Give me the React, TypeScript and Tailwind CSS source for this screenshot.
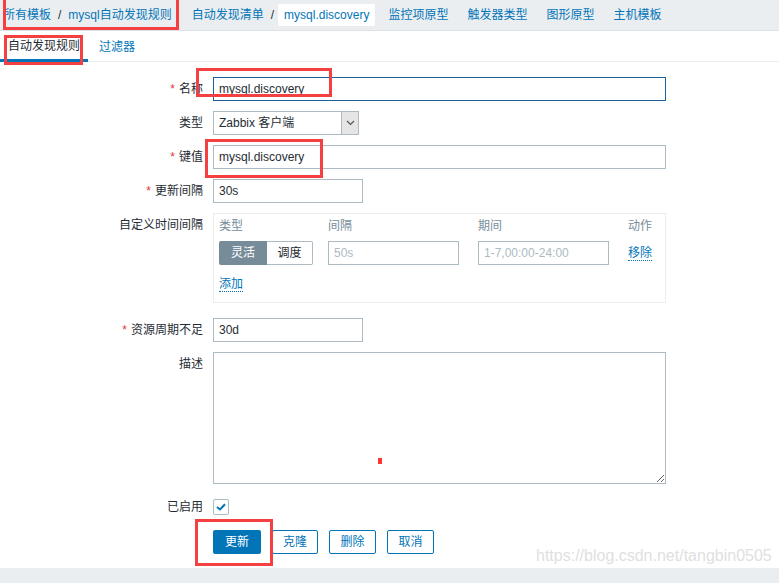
import React from "react";

const font = { fontFamily: '"Liberation Sans", Arial, "Noto Sans CJK SC", sans-serif' };

const Label = ({ text, required, top }: { text: string; required?: boolean; top?: boolean }) => (
  <div
    className={`w-[213px] shrink-0 pr-[10px] text-right text-[12px] text-[#1f2c33] ${top ? "pt-[5px] leading-[14px]" : "leading-[24px]"}`}>
    {required && <span className="text-[#e33734] mr-[4px]">*</span>}
    {text}
  </div>
);

const TextInput = ({ value, width, focused }: { value: string; width: string; focused?: boolean }) => (
  <input
    readOnly
    value={value}
    className={`${width} h-[24px] px-[5px] text-[12px] text-[#1f2c33] bg-white border outline-none ${focused ? "border-[#1f5f99]" : "border-[#acbbc2]"}`}
    style={font}
  />
);

const RedBox = ({ className }: { className: string }) => (
  <div className={`absolute border-[3px] border-[#f44040] pointer-events-none ${className}`} />
);

export default function App() {
  const topLinks = ["监控项原型", "触发器类型", "图形原型", "主机模板"];

  return (
    <div className="relative w-[779px] h-[583px] overflow-hidden bg-white flex flex-col" style={font}>
      {/* breadcrumbs */}
      <div className="h-[31px] shrink-0 bg-[#ebeef1] border-b border-[#dde2e6] flex items-center text-[12px] text-[#0275b8]">
        <span className="ml-[3px]">所有模板</span>
        <span className="mx-[7px] text-[#1f2c33]">/</span>
        <span>mysql自动发现规则</span>
        <span className="ml-[20px]">自动发现清单</span>
        <span className="ml-[7px] mr-[4px] text-[#1f2c33]">/</span>
        <span className="bg-white px-[6px] h-[22px] leading-[22px] rounded-[2px]">mysql.discovery</span>
        {topLinks.map((t, i) => (
          <span key={t} className={i === 0 ? "ml-[13px]" : "ml-[19px]"}>
            {t}
          </span>
        ))}
      </div>

      {/* tabs */}
      <div className="h-[31px] shrink-0 border-b border-[#ebeef1] flex items-stretch text-[12px]">
        <div className="w-[88px] flex items-center justify-center text-[#1f2c33] border-b-[3px] border-[#0275b8] -mb-px pt-[2px]">
          自动发现规则
        </div>
        <div className="ml-[11px] flex items-center text-[#0275b8] pt-[1px]">过滤器</div>
      </div>

      {/* form */}
      <div className="flex-1 pt-[15px]">
        <div className="flex mb-[10px]">
          <Label text="名称" required />
          <TextInput value="mysql.discovery" width="w-[453px]" focused />
        </div>

        <div className="flex mb-[10px]">
          <Label text="类型" />
          <div className="w-[146px] h-[24px] border border-[#acbbc2] bg-white flex text-[12px] text-[#1f2c33]">
            <div className="flex-1 pl-[5px] leading-[22px]">Zabbix 客户端</div>
            <div className="w-[17px] bg-[#e5e5e5] border-l border-[#acbbc2] flex items-center justify-center">
              <svg width="9" height="6" viewBox="0 0 9 6">
                <path d="M1 1 L4.5 4.5 L8 1" fill="none" stroke="#555" strokeWidth="1.2" />
              </svg>
            </div>
          </div>
        </div>

        <div className="flex mb-[10px]">
          <Label text="键值" required />
          <TextInput value="mysql.discovery" width="w-[453px]" />
        </div>

        <div className="flex mb-[10px]">
          <Label text="更新间隔" required />
          <TextInput value="30s" width="w-[150px]" />
        </div>

        <div className="flex mb-[15px]">
          <Label text="自定义时间间隔" top />
          <div className="w-[453px] h-[90px] border border-[#ebeef1] px-[5px] pt-[5px]">
            <div className="grid grid-cols-[109px_150px_150px_auto] text-[12px] leading-[14px] text-[#768d99]">
              <span>类型</span>
              <span>间隔</span>
              <span>期间</span>
              <span>动作</span>
            </div>
            <div className="grid grid-cols-[109px_150px_150px_auto] mt-[8px] items-center text-[12px]">
              <div className="flex w-[94px] h-[24px]">
                <div className="w-[48px] bg-[#768d99] text-white flex items-center justify-center rounded-l-[2px]">灵活</div>
                <div className="flex-1 border border-[#acbbc2] border-l-0 text-[#1f2c33] flex items-center justify-center rounded-r-[2px]">
                  调度
                </div>
              </div>
              <input
                readOnly
                placeholder="50s"
                className="w-[131px] h-[24px] px-[5px] border border-[#acbbc2] text-[12px] outline-none placeholder:text-[#acbbc2]"
                style={font}
              />
              <input
                readOnly
                placeholder="1-7,00:00-24:00"
                className="w-[131px] h-[24px] px-[5px] border border-[#acbbc2] text-[12px] outline-none placeholder:text-[#acbbc2]"
                style={font}
              />
              <span className="w-fit text-[#0275b8] border-b border-dotted border-[#0275b8] leading-[14px]">移除</span>
            </div>
            <div className="mt-[12px] text-[12px] leading-[14px]">
              <span className="text-[#0275b8] border-b border-dotted border-[#0275b8]">添加</span>
            </div>
          </div>
        </div>

        <div className="flex mb-[10px]">
          <Label text="资源周期不足" required />
          <TextInput value="30d" width="w-[150px]" />
        </div>

        <div className="flex mb-[15px]">
          <Label text="描述" top />
          <textarea readOnly className="w-[453px] h-[132px] border border-[#acbbc2] outline-none resize" />
        </div>

        <div className="flex mb-[15px] items-center">
          <div className="w-[213px] shrink-0 pr-[10px] text-right text-[12px] text-[#1f2c33] leading-[16px]">已启用</div>
          <div className="w-[16px] h-[16px] border border-[#acbbc2] rounded-[2px] flex items-center justify-center">
            <svg width="10" height="8" viewBox="0 0 10 8">
              <path d="M1 4 L4 6.5 L9 1.2" fill="none" stroke="#0275b8" strokeWidth="2" />
            </svg>
          </div>
        </div>

        <div className="flex pl-[213px] gap-[11px] text-[12px]">
          <button className="w-[48px] h-[24px] bg-[#0275b8] text-white rounded-[2px]">更新</button>
          <button className="w-[46px] h-[24px] border border-[#0275b8] text-[#0275b8] rounded-[2px]">克隆</button>
          <button className="w-[47px] h-[24px] border border-[#0275b8] text-[#0275b8] rounded-[2px]">删除</button>
          <button className="w-[47px] h-[24px] border border-[#0275b8] text-[#0275b8] rounded-[2px]">取消</button>
        </div>
      </div>

      <div className="h-[15px] shrink-0 bg-[#ebeef1]" />

      {/* annotations */}
      <RedBox className="left-[3px] top-[-3px] w-[176px] h-[33px]" />
      <RedBox className="left-[4px] top-[35px] w-[79px] h-[30px]" />
      <RedBox className="left-[196px] top-[68px] w-[136px] h-[29px]" />
      <RedBox className="left-[205px] top-[139px] w-[118px] h-[39px]" />
      <RedBox className="left-[195px] top-[519px] w-[78px] h-[47px]" />
      <div className="absolute left-[378px] top-[458px] w-[4px] h-[6px] bg-[#ff3535]" />
      <div className="absolute left-[536px] top-[544px] text-[16px] text-[#e0e0e0] pointer-events-none [text-shadow:0_0_1px_#fff]">
        https://blog.csdn.net/tangbin0505
      </div>
    </div>
  );
}
